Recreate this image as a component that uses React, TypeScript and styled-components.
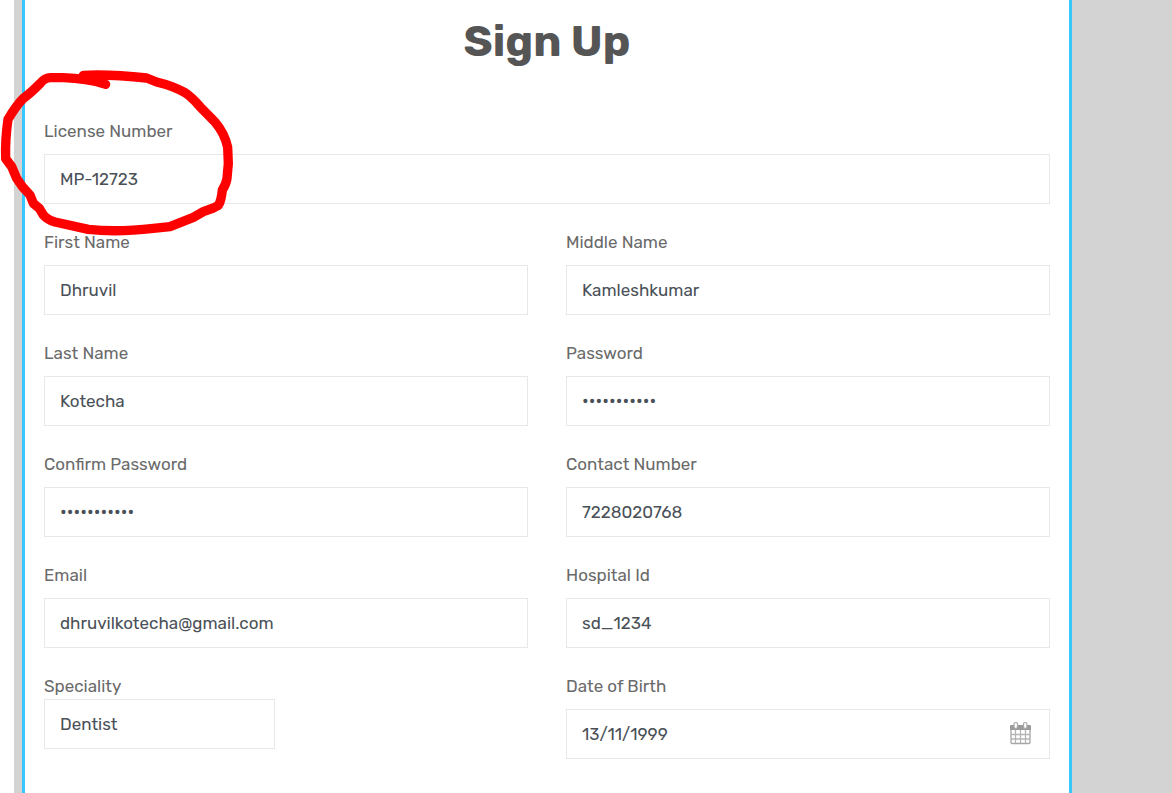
import React, { useId, useState } from "react";
import styled, { createGlobalStyle } from "styled-components";

const GlobalStyle = createGlobalStyle`
  * { box-sizing: border-box; }
  body {
    margin: 0;
    background: #fff;
    color: #666;
    font-family: Rubik, Inter, "Liberation Sans", sans-serif;
    font-size: 17px;
    font-weight: 400;
    line-height: 25px;
  }
`;

const Page = styled.div`
  position: relative;
  min-height: 100vh;
  padding-left: 14px;
  overflow: hidden;
`;

const Backdrop = styled.div`
  min-height: 100vh;
  padding: 0 100px 0 8px;
  background: #d3d3d3;
`;

const Panel = styled.main`
  min-height: 100vh;
  padding: 16px 19px 34px;
  background: #fff;
  border: solid #38c6ff;
  border-width: 0 3px;
`;

const Title = styled.h1`
  margin: 0 0 53px;
  color: #555;
  font-size: 44px;
  font-weight: 700;
  line-height: 50px;
  text-align: center;
`;

const Form = styled.form`
  display: grid;
  grid-template-columns: 1fr 1fr;
  gap: 26px 38px;
`;

const FieldGroup = styled.div<{ $wide?: boolean; $tight?: boolean }>`
  display: flex;
  flex-direction: column;
  align-items: flex-start;
  gap: ${(p) => (p.$tight ? 0 : 10)}px;
  grid-column: ${(p) => (p.$wide ? "1 / -1" : "auto")};
`;

const Label = styled.label`
  color: #6a6a6a;
`;

const Input = styled.input`
  width: 100%;
  height: 50px;
  padding: 0 15px;
  border: 1px solid #e8e8e8;
  border-radius: 0;
  background: #fff;
  color: #495057;
  font: inherit;
  outline: none;

  &[type="password"] {
    font-family: Roboto, sans-serif;
    font-size: 20px;
  }
`;

const Select = styled.select`
  width: 231px;
  height: 50px;
  padding: 0 15px;
  border: 1px solid #e8e8e8;
  border-radius: 0;
  background: #fff;
  color: #495057;
  font: inherit;
  appearance: none;
`;

const DateBox = styled.div`
  position: relative;
  width: 100%;
  display: flex;
`;

const CalendarButton = styled.button`
  position: absolute;
  top: 12px;
  right: 17px;
  width: 24px;
  height: 24px;
  padding: 0;
  border: 0;
  background: none;
  cursor: pointer;

  svg { display: block; }
`;

const Marker = styled.svg`
  position: absolute;
  top: 60px;
  left: 0;
  width: 250px;
  height: 190px;
  pointer-events: none;
`;

type FieldProps = { label: string; value: string; type?: string; wide?: boolean };

function Field({ label, value, type = "text", wide }: FieldProps) {
  const id = useId();
  const [text, setText] = useState(value);
  return (
    <FieldGroup $wide={wide}>
      <Label htmlFor={id}>{label}</Label>
      <Input id={id} type={type} value={text} onChange={(e) => setText(e.target.value)} />
    </FieldGroup>
  );
}

function CalendarIcon() {
  return (
    <svg width="24" height="24" viewBox="0 0 24 24" fill="none" aria-hidden="true">
      <path d="M2 5.5h19v16q0 1-1 1H3q-1 0-1-1z" fill="#fff" stroke="#a6a6a6" strokeWidth="1.3" />
      <path d="M1 5q0-1 1-1h19q1 0 1 1v4H1z" fill="#9a9a9a" />
      <path d="M6.5 9v13M11.5 9v13M16.5 9v13M2 13.5h19M2 18h19" stroke="#b4b4b4" strokeWidth="1.3" />
      <rect x="5" y="1.5" width="3.5" height="6" rx="1.7" fill="#fff" stroke="#a8a8a8" strokeWidth="1.2" />
      <rect x="14.5" y="1.5" width="3.5" height="6" rx="1.7" fill="#fff" stroke="#a8a8a8" strokeWidth="1.2" />
    </svg>
  );
}

export default function App() {
  return (
    <Page>
      <GlobalStyle />
      <Backdrop>
        <Panel>
          <Title>Sign Up</Title>
          <Form>
            <Field label="License Number" value="MP-12723" wide />
            <Field label="First Name" value="Dhruvil" />
            <Field label="Middle Name" value="Kamleshkumar" />
            <Field label="Last Name" value="Kotecha" />
            <Field label="Password" value="secret12345" type="password" />
            <Field label="Confirm Password" value="secret12345" type="password" />
            <Field label="Contact Number" value="7228020768" type="tel" />
            <Field label="Email" value="dhruvilkotecha@gmail.com" type="email" />
            <Field label="Hospital Id" value="sd_1234" />
            <FieldGroup $tight>
              <Label htmlFor="speciality">Speciality</Label>
              <Select id="speciality" defaultValue="Dentist">
                <option>Dentist</option>
              </Select>
            </FieldGroup>
            <FieldGroup>
              <Label htmlFor="birth">Date of Birth</Label>
              <DateBox>
                <Input id="birth" defaultValue="13/11/1999" />
                <CalendarButton type="button" aria-label="Choose date">
                  <CalendarIcon />
                </CalendarButton>
              </DateBox>
            </FieldGroup>
          </Form>
        </Panel>
      </Backdrop>
      <Marker viewBox="0 0 750 570" aria-hidden="true">
        <path
          d="M250 46Q330 42 440 54L470 66Q520 78 555 98Q575 111 600 140L645 186Q674 220 683 262L685 310L681 355Q679 371 667 390Q664 422 655 436L640 444L610 455L580 472L510 500L460 505Q350 518 265 508L165 486Q142 479 130 465L118 445L100 430L90 405Q66 382 50 355L35 320L17 296Q15 240 24 178Q48 137 70 115Q90 101 120 71Q134 53 152 53L190 53Q260 55 317 73"
          fill="none"
          stroke="#f00"
          strokeWidth="28"
          strokeLinecap="round"
          strokeLinejoin="round"
        />
      </Marker>
    </Page>
  );
}
